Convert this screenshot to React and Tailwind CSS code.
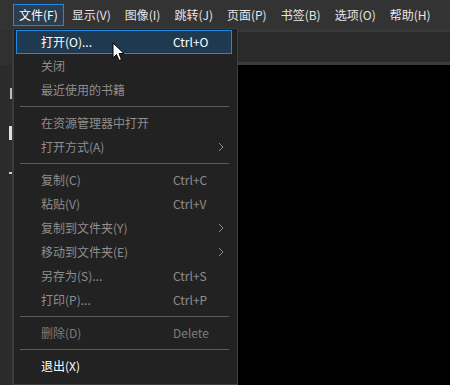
import React from 'react';

const font = { fontFamily: '"Noto Sans CJK SC", "Noto Sans", sans-serif' };

const menus = ['文件(F)', '显示(V)', '图像(I)', '跳转(J)', '页面(P)', '书签(B)', '选项(O)', '帮助(H)'];

const items = [
  { label: '打开(O)...', key: 'Ctrl+O', active: true },
  { label: '关闭' },
  { label: '最近使用的书籍' },
  { sep: true },
  { label: '在资源管理器中打开' },
  { label: '打开方式(A)', sub: true },
  { sep: true },
  { label: '复制(C)', key: 'Ctrl+C' },
  { label: '粘贴(V)', key: 'Ctrl+V' },
  { label: '复制到文件夹(Y)', sub: true },
  { label: '移动到文件夹(E)', sub: true },
  { label: '另存为(S)...', key: 'Ctrl+S' },
  { label: '打印(P)...', key: 'Ctrl+P' },
  { sep: true },
  { label: '删除(D)', key: 'Delete', dim: true },
  { sep: true },
  { label: '退出(X)', bright: true },
];

const Cursor = () => (
  <svg className="absolute left-[112px] top-[42px]" width="14" height="20" viewBox="0 0 14 20">
    <path d="M1 1 L1 16 L4.5 12.5 L7 18.5 L9.5 17.5 L7 11.5 L12 11.5 Z" fill="#fff" stroke="#000" strokeWidth="1" />
  </svg>
);

export default function App() {
  return (
    <div className="relative w-[450px] h-[385px] overflow-hidden bg-black text-[12px] flex flex-col" style={font}>
      {/* menu bar */}
      <div className="h-[30px] shrink-0 bg-[#333333] flex items-center pl-[13px] whitespace-nowrap">
        {menus.map((m, i) => (
          <div
            key={m}
            className={`h-[22px] flex items-center px-[5px] mr-[2px] border ${i === 0 ? 'border-[#1e88e5] bg-[#2a3e50] text-white' : 'border-transparent text-[#e6e6e6]'}`}
          >
            {m}
          </div>
        ))}
      </div>

      <div className="flex flex-1">
        {/* left side strip */}
        <div className="w-[13px] bg-[#2b2b2b] border-r border-r-[#3a3a3a] flex flex-col items-end">
          <div className="h-[35px] self-stretch bg-[#303030]" />
          <div className="mt-[23px] w-[2px] h-[11px] bg-[#bdbdbd]" />
          <div className="mt-[27px] w-[3px] h-[14px] bg-[#e0e0e0]" />
          <div className="mt-[32px] w-[3px] h-[2px] bg-[#d0d0d0]" />
        </div>
        <div className="flex-1 flex flex-col">
          {/* toolbar */}
          <div className="h-[35px] bg-[#2a2a2a] border-t-2 border-t-[#393939] border-b-[3px] border-b-[#3c3c3c]" />
          <div className="flex-1 bg-black" />
        </div>
      </div>

      {/* dropdown */}
      <div className="absolute left-[13px] top-[28px] w-[225px] h-[357px] bg-[#222222] border border-[#3d3d3d] pl-[2px] pr-[5px] pt-[1px] whitespace-nowrap">
        {items.map((it, i) =>
          it.sep ? (
            <div key={i} className="h-[9px] flex items-center pl-[4px] pr-[3px]">
              <div className="h-px w-full bg-[#5c5c5c]" />
            </div>
          ) : (
            <div
              key={i}
              className={`h-[24px] flex items-center border ${it.active ? 'border-[#1e88e5] bg-[#1f3a50] text-white' : 'border-transparent'} ${it.bright ? 'text-white' : it.dim ? 'text-[#7c7c7c]' : it.active ? '' : 'text-[#8e8e8e]'}`}
            >
              <span className="pl-[24px] w-[156px]">{it.label}</span>
              {it.key && <span>{it.key}</span>}
              {it.sub && (
                <svg className="ml-[45px]" width="6" height="10" viewBox="0 0 6 10">
                  <path d="M1 1 L5 5 L1 9" fill="none" stroke="#8a8a8a" strokeWidth="1" />
                </svg>
              )}
            </div>
          )
        )}
      </div>

      <Cursor />
    </div>
  );
}
